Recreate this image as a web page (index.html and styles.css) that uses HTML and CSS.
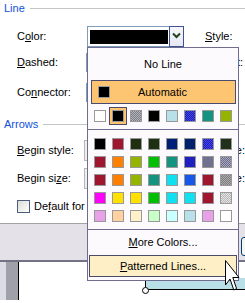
FILE: index.html
```html
<!DOCTYPE html>
<html lang="en">
<head>
    <meta charset="UTF-8">
    <title>Format AutoShape - Line Color</title>
    <link rel="stylesheet" href="styles.css">
</head>
<body>
    <div class="dialog">
        <div class="group"><span class="group-name">Line</span><span class="group-rule"></span></div>

        <div class="row row-color">
            <span class="label">C<u>o</u>lor:</span>
            <div class="color-combo">
                <span class="color-field"><span class="color-value"></span></span>
                <span class="drop-btn">
                    <svg width="13" height="19" viewBox="0 0 13 19"><path d="M3 6.5 L6.5 10 L10 6.5" fill="none" stroke="#27401a" stroke-width="2"/></svg>
                </span>
            </div>
            <span class="label-right"><u>S</u>tyle:</span>
        </div>

        <div class="row row-dashed">
            <span class="label"><u>D</u>ashed:</span>
            <div class="combo"></div>
            <span class="label-right"><u>W</u>eight:</span>
        </div>

        <div class="row row-connector">
            <span class="label">Co<u>n</u>nector:</span>
            <div class="combo"></div>
        </div>

        <div class="group group-arrows"><span class="group-name">Arrows</span><span class="group-rule"></span></div>

        <div class="row row-bstyle">
            <span class="label label-short"><u>B</u>egin style:</span>
            <div class="combo combo-arrow"></div>
            <span class="label-right"><u>E</u>nd style:</span>
        </div>

        <div class="row row-bsize">
            <span class="label label-short">Begin si<u>z</u>e:</span>
            <div class="combo combo-arrow"></div>
            <span class="label-right">E<u>n</u>d size:</span>
        </div>

        <div class="row row-check">
            <span class="checkbox"></span>
            <span>De<u>f</u>ault for new objects</span>
        </div>
    </div>

    <div class="button-band">
        <span class="btn"></span>
    </div>

    <div class="canvas">
        <span class="ruler"></span>
        <div class="shape"></div>
        <span class="handle"></span>
    </div>

    <div class="menu">
        <div class="menu-item no-line">No Line</div>
        <div class="auto"><span class="swatch" style="background:#000"></span><span class="auto-text">Automatic</span></div>

        <div class="swatches recent">
            <span class="cell"><span class="swatch" style="background:#fff"></span></span>
            <span class="cell selected"><span class="swatch" style="background:#000"></span></span>
            <span class="cell"><span class="swatch pat" style="--a:#7c7c84;--b:#b4b4bc"></span></span>
            <span class="cell"><span class="swatch" style="background:#000"></span></span>
            <span class="cell"><span class="swatch" style="background:#b8e0e8"></span></span>
            <span class="cell"><span class="swatch pat" style="--a:#1c1cb8;--b:#4848e8"></span></span>
            <span class="cell"><span class="swatch" style="background:#149480"></span></span>
            <span class="cell"><span class="swatch" style="background:#94b400"></span></span>
        </div>

        <div class="menu-sep"></div>

        <div class="swatches grid">
            <span class="cell"><span class="swatch" style="background:#000"></span></span>
            <span class="cell"><span class="swatch" style="background:#a0162e"></span></span>
            <span class="cell"><span class="swatch" style="background:#1f2f10"></span></span>
            <span class="cell"><span class="swatch" style="background:#1f3010"></span></span>
            <span class="cell"><span class="swatch" style="background:#002078"></span></span>
            <span class="cell"><span class="swatch" style="background:#001f6c"></span></span>
            <span class="cell"><span class="swatch pat" style="--a:#1c1cb8;--b:#4848e8"></span></span>
            <span class="cell"><span class="swatch" style="background:#20301a"></span></span>

            <span class="cell"><span class="swatch" style="background:#a0162e"></span></span>
            <span class="cell"><span class="swatch" style="background:#ff8000"></span></span>
            <span class="cell"><span class="swatch" style="background:#94b400"></span></span>
            <span class="cell"><span class="swatch" style="background:#00c000"></span></span>
            <span class="cell"><span class="swatch" style="background:#149480"></span></span>
            <span class="cell"><span class="swatch" style="background:#2020c0"></span></span>
            <span class="cell"><span class="swatch" style="background:#707090"></span></span>
            <span class="cell"><span class="swatch pat" style="--a:#6c6c90;--b:#a8a8bc"></span></span>

            <span class="cell"><span class="swatch" style="background:#a0162e"></span></span>
            <span class="cell"><span class="swatch" style="background:#ff8000"></span></span>
            <span class="cell"><span class="swatch" style="background:#94b400"></span></span>
            <span class="cell"><span class="swatch" style="background:#149480"></span></span>
            <span class="cell"><span class="swatch" style="background:#10e0f0"></span></span>
            <span class="cell"><span class="swatch" style="background:#1858e8"></span></span>
            <span class="cell"><span class="swatch" style="background:#a0162e"></span></span>
            <span class="cell"><span class="swatch pat" style="--a:#7c7c7c;--b:#acacac"></span></span>

            <span class="cell"><span class="swatch" style="background:#ff00ff"></span></span>
            <span class="cell"><span class="swatch" style="background:#ffe000"></span></span>
            <span class="cell"><span class="swatch" style="background:#ffe000"></span></span>
            <span class="cell"><span class="swatch" style="background:#00c000"></span></span>
            <span class="cell"><span class="swatch" style="background:#10e0f0"></span></span>
            <span class="cell"><span class="swatch" style="background:#10e0f0"></span></span>
            <span class="cell"><span class="swatch" style="background:#a0162e"></span></span>
            <span class="cell"><span class="swatch pat" style="--a:#b8b8b8;--b:#e4e4e4"></span></span>

            <span class="cell"><span class="swatch" style="background:#e8a0e8"></span></span>
            <span class="cell"><span class="swatch" style="background:#ffd0a0"></span></span>
            <span class="cell"><span class="swatch" style="background:#fff0c8"></span></span>
            <span class="cell"><span class="swatch" style="background:#c8ffc8"></span></span>
            <span class="cell"><span class="swatch" style="background:#c8ffff"></span></span>
            <span class="cell"><span class="swatch" style="background:#b8e0e8"></span></span>
            <span class="cell"><span class="swatch" style="background:#e8a0e8"></span></span>
            <span class="cell"><span class="swatch" style="background:#fff"></span></span>
        </div>

        <div class="menu-sep"></div>

        <div class="menu-item more"><span><u>M</u>ore Colors...</span></div>
        <div class="menu-item patterned"><span><u>P</u>atterned Lines...</span></div>
    </div>

    <svg class="cursor" width="16" height="32" viewBox="0 0 16 32">
        <polygon points="0.5,0.5 0.5,25 5,19 8.8,30 11.6,28.6 7.8,17.5 14,17.5" fill="#fff" stroke="#000" stroke-width="1" stroke-linejoin="miter"/>
    </svg>
</body>
</html>
```

FILE: styles.css
```css
body {
    margin: 0;
    width: 245px;
    height: 303px;
    overflow: hidden;
    position: relative;
    background: #fff;
    color: #000;
    font-family: "Liberation Sans", Arial, sans-serif;
    font-size: 11px;
    line-height: 13px;
}

u {
    text-decoration-thickness: 1px;
    text-underline-offset: 1px;
}

/* dialog underneath the popup */

.dialog {
    overflow: hidden;
}

.group {
    display: flex;
    align-items: center;
    gap: 5px;
    height: 17px;
    padding-left: 4px;
}

.group-name {
    color: #1150dc;
}

.group-rule {
    flex: 1;
    height: 1px;
    background: #c4c4c4;
}

.group-arrows {
    margin-top: 13px;
}

.row {
    display: flex;
    align-items: center;
    height: 21px;
    padding-left: 17px;
    white-space: nowrap;
}

.label {
    width: 70px;
    flex: none;
}

.label-short {
    width: 67px;
}

.label-right {
    margin-left: 21px;
}

.row-color { margin-top: 9px; }
.row-dashed { margin-top: 5px; }
.row-connector { margin-top: 9px; }
.row-bstyle { margin-top: 7px; }
.row-bsize { margin-top: 7px; }
.row-bsize .label-right { margin-left: 20px; }

.row-check {
    margin-top: 10px;
    height: 14px;
}

.color-combo {
    display: flex;
    height: 21px;
}

.color-field {
    width: 82px;
    box-sizing: border-box;
    border: 1px solid #7f9db9;
    border-right: none;
    padding: 3px 1px 2px 2px;
    background: #fff;
}

.color-value {
    display: block;
    height: 100%;
    background: #000;
}

.drop-btn {
    width: 15px;
    box-sizing: border-box;
    border: 1px solid #3f5390;
    background: linear-gradient(#f6f6fc, #e8e8f4);
}

.drop-btn svg {
    display: block;
}

.combo {
    width: 99px;
    height: 19px;
    margin-left: -1px;
    box-sizing: border-box;
    border: 1px solid #7f9db9;
    background: #fff;
}

.combo-arrow {
    width: 97px;
    height: 21px;
    margin-left: 0;
    border-color: #b5b5b5;
    background: #efefec;
}

.checkbox {
    width: 13px;
    height: 13px;
    box-sizing: border-box;
    margin-right: 4px;
    border: 1px solid #4d5d7c;
    background: linear-gradient(135deg, #dcdcd7, #fff);
}

.button-band {
    margin-top: 10px;
    height: 39px;
    padding-left: 241px;
    padding-top: 13px;
    box-sizing: border-box;
    overflow: hidden;
    border-top: 1px solid #a3a3a3;
    border-bottom: 2px solid #737386;
    background: #e5e1e9;
}

.btn {
    display: block;
    width: 75px;
    height: 19px;
    box-sizing: border-box;
    border: 1px solid #003c74;
    border-radius: 3px;
    background: #f6f6f2;
}

.canvas {
    position: relative;
    height: 38px;
    overflow: hidden;
    background: #fff;
}

.ruler {
    display: block;
    width: 12px;
    height: 100%;
    border-left: 6px solid #dcdce6;
    border-right: 1px solid #000;
    background: #a0a0a8;
}

.shape {
    position: absolute;
    left: 145px;
    top: 16px;
    width: 100px;
    height: 11px;
    border-left: 1px solid #000;
    border-bottom: 1px solid #000;
    background: #b8e0e6;
}

.handle {
    position: absolute;
    left: 142px;
    top: 25px;
    width: 5px;
    height: 5px;
    border: 1px solid #000;
    border-radius: 50%;
    background: #fff;
}

/* color popup */

.menu {
    position: absolute;
    left: 87px;
    top: 47px;
    width: 152px;
    height: 234px;
    box-sizing: border-box;
    border: 1px solid #6e6d8f;
    background: #fdfafd;
}

.menu-item {
    display: flex;
    align-items: center;
    justify-content: center;
}

.no-line {
    height: 32px;
}

.auto {
    display: flex;
    align-items: center;
    height: 24px;
    margin: 0 2px 0 3px;
    padding: 0 20px 0 6px;
    box-sizing: border-box;
    border: 1px solid #4b4b6f;
    background: #fdc572;
}

.auto-text {
    flex: 1;
    text-align: center;
}

.swatches {
    display: grid;
    grid-template-columns: repeat(8, 18px);
    grid-auto-rows: 18px;
    margin-left: 3px;
}

.recent {
    margin-top: 3px;
}

.grid {
    margin-top: 5px;
}

.cell {
    box-sizing: border-box;
    padding: 3px;
}

.cell.selected {
    padding: 2px;
    border: 1px solid #4b4b6f;
    background: #fdc572;
}

.swatch {
    display: block;
    width: 12px;
    height: 12px;
    flex: none;
    box-sizing: border-box;
    border: 1px solid #999;
}

.swatch.pat {
    background: repeating-conic-gradient(var(--a) 0 25%, var(--b) 0 50%) 0 0 / 2px 2px;
}

.menu-sep {
    height: 1px;
    margin-top: 4px;
    background: #6e6d8f;
}

.more {
    height: 25px;
}

.patterned {
    height: 22px;
    margin: 0 1px;
    box-sizing: border-box;
    border: 1px solid #4b4b6f;
    background: #feefc6;
}

.cursor {
    position: absolute;
    left: 225px;
    top: 260px;
}
```
